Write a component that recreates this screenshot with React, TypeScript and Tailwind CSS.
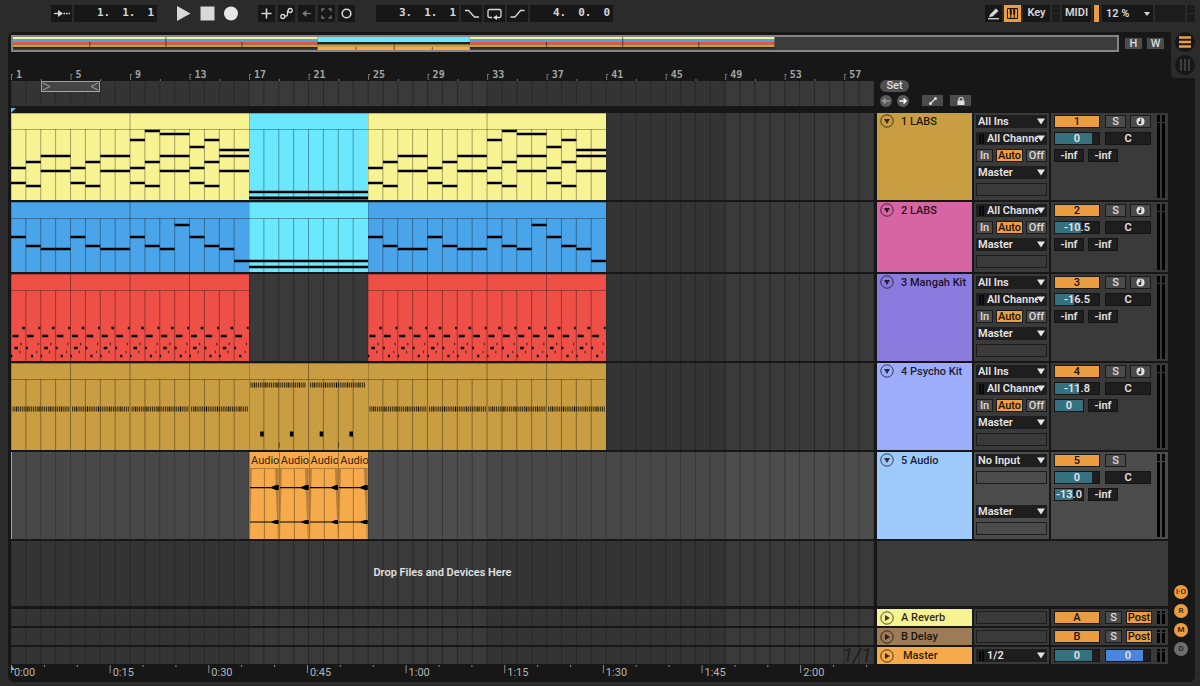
import type { ReactNode } from "react"
import classNames from "clsx"

const TOTAL_BARS = 58

const pct = (bars: number) => `${(bars / TOTAL_BARS) * 100}%`
const range = (length: number, step = 1) => Array.from({ length }, (_, i) => i * step)

// start and length are in bars, y and h in pixels
type Note = { start: number; length: number; y: number; h?: number; opacity?: number }

type Clip = {
    start: number
    length: number
    color: string
    splits?: number[]
    notes?: Note[]
}

const phrase = [0, 4, 8, 12]

const labsNotes: Note[] = [
    ...phrase.flatMap((b) => [
        { start: b, length: 1, y: 55 },
        { start: b, length: 1, y: 70 },
        { start: b + 1, length: 1, y: 49 },
        { start: b + 1, length: 1, y: 73 },
        { start: b + 2, length: 2, y: 43 },
        { start: b + 2, length: 2, y: 58 },
    ]),
    { start: 8, length: 1, y: 27 },
    { start: 9, length: 1, y: 18 },
    { start: 10, length: 2, y: 21 },
    { start: 12, length: 1, y: 34 },
    { start: 13, length: 1, y: 27 },
    { start: 14, length: 2, y: 37 },
]

const bassNotes: Note[] = [35, 44, 47, 47, 35, 44, 47, 47, 35, 44, 47, 23, 35, 44, 47, 59].map((y, i) => ({
    start: i,
    length: 1,
    y,
}))

const drumNotes: Note[] = range(8, 2).flatMap((b) => [
    { start: b + 0.1, length: 0.4, y: 62 },
    { start: b + 0.75, length: 0.18, y: 54 },
    { start: b + 0.63, length: 0.09, y: 70, opacity: 0.6 },
    { start: b + 0.23, length: 0.24, y: 74 },
    { start: b + 0.55, length: 0.08, y: 78, opacity: 0.6 },
    { start: b, length: 0.09, y: 82 },
    { start: b + 1.08, length: 0.44, y: 62 },
    { start: b + 1.85, length: 0.12, y: 54 },
    { start: b + 1.78, length: 0.08, y: 70, opacity: 0.6 },
    { start: b + 1, length: 0.13, y: 74 },
    { start: b + 1.7, length: 0.07, y: 78, opacity: 0.6 },
    { start: b + 1.34, length: 0.14, y: 82 },
])

const hats = (from: number, count: number, y: number): Note[] =>
    range(count).map((i) => ({
        start: from + 0.1 + i * 0.125,
        length: 0.07,
        y,
        h: 5,
        opacity: i % 6 === 2 ? 1 : 0.7,
    }))

const mainHats = phrase.flatMap((b) => hats(b, 31, 46))

const breakNotes: Note[] = [
    ...hats(0, 30, 22),
    ...hats(4, 30, 22),
    ...range(4, 2).map((b) => ({ start: b + 0.75, length: 0.24, y: 71, h: 5 })),
    { start: 2, length: 0.05, y: 82, h: 5, opacity: 0.7 },
    { start: 6, length: 0.05, y: 82, h: 5, opacity: 0.7 },
]

const trackClips: Clip[][] = [
    [
        { start: 0, length: 16, color: "bg-[#f8f392]", splits: [8], notes: labsNotes },
        {
            start: 16,
            length: 8,
            color: "bg-[#6be8fd]",
            notes: [{ start: 0, length: 8, y: 79 }, { start: 0, length: 8, y: 85, h: 3 }],
        },
        { start: 24, length: 16, color: "bg-[#f8f392]", splits: [8], notes: labsNotes },
    ],
    [
        { start: 0, length: 16, color: "bg-[#4aa4ea]", splits: [8], notes: bassNotes },
        {
            start: 16,
            length: 8,
            color: "bg-[#6be8fd]",
            notes: [{ start: 0, length: 8, y: 59 }, { start: 0, length: 8, y: 65 }],
        },
        { start: 24, length: 16, color: "bg-[#4aa4ea]", splits: [8], notes: bassNotes },
    ],
    [
        { start: 0, length: 16, color: "bg-[#ee4f47]", splits: [4, 8, 12], notes: drumNotes },
        { start: 24, length: 16, color: "bg-[#ee4f47]", splits: [4, 8, 12], notes: drumNotes },
    ],
    [
        { start: 0, length: 16, color: "bg-[#c99d42]", splits: [4, 8, 12], notes: mainHats },
        { start: 16, length: 8, color: "bg-[#c99d42]", splits: [4], notes: breakNotes },
        { start: 24, length: 16, color: "bg-[#c99d42]", splits: [4, 8, 12], notes: mainHats },
    ],
]

const VLine = ({ x, y1 = "0", className }: { x: string; y1?: string; className: string }) => (
    <line x1={x} x2={x} y1={y1} y2="100%" className={className} />
)

const Grid = ({ selected }: { selected?: boolean }) => (
    <svg className="absolute inset-0 size-full" aria-hidden="true">
        {range(4, 16).map((b) => (
            <rect
                key={b}
                x={pct(b)}
                width={pct(16)}
                height="100%"
                className={
                    selected
                        ? b % 32 ? "fill-[#4d4d4d]" : "fill-[#474747]"
                        : b % 32 ? "fill-[#3a3a3a]" : "fill-[#343434]"
                }
            />
        ))}
        {range(59).map((b) => (
            <VLine key={b} x={pct(b)} className={selected ? "stroke-[#393939]" : "stroke-[#282828]"} />
        ))}
    </svg>
)

const Lane = ({ selected, children }: { selected?: boolean; children?: ReactNode }) => (
    <div className="relative flex min-w-0 flex-1 overflow-hidden">
        <Grid selected={selected} />
        {children}
    </div>
)

const MidiClip = ({ start, length, color, splits = [], notes = [] }: Clip) => {
    const part = (bars: number) => `${(bars / length) * 100}%`
    return (
        <div className={classNames("absolute inset-y-0", color)} style={{ left: pct(start), width: pct(length) }}>
            <svg className="size-full" aria-hidden="true">
                <line x1="0" x2="100%" y1="16.5" y2="16.5" className="stroke-black/30" />
                <line x1="0" x2="100%" y1="0" y2="0" className="stroke-black/50" />
                {range(length).map((b) => (
                    <VLine
                        key={b}
                        x={part(b)}
                        y1={b === 0 || splits.includes(b) ? "0" : "16"}
                        className="stroke-black/35"
                    />
                ))}
                {notes.map((n, i) => (
                    <rect
                        key={i}
                        x={part(n.start)}
                        width={part(n.length)}
                        y={n.y - (n.h ?? 2.5) / 2}
                        height={n.h ?? 2.5}
                        opacity={n.opacity}
                    />
                ))}
            </svg>
        </div>
    )
}

const AudioClip = ({ start }: { start: number }) => (
    <div
        className="absolute inset-y-0 flex flex-col overflow-hidden border-l border-[#a8752f] bg-[#f5ab4c]"
        style={{ left: pct(start), width: pct(2) }}
    >
        <span className="h-[17px] border-b border-[#b27c37] pl-px text-[11px] leading-[17px] text-[#33230f]">Audio</span>
        <svg className="w-full flex-1" viewBox="0 0 30 70" preserveAspectRatio="none" aria-hidden="true">
            <path d="M0 0H2L0 70ZM30 0H26L29 70H30Z" className="fill-black/25" />
            <path d="M15 0V70" className="stroke-black/35" />
            <path d="M0 18H22L27 16H30V21H27L22 19.2H0Z" />
            <path d="M0 52.5H22L27 51H30V55H27L22 53.5H0Z" />
        </svg>
    </div>
)

const DownTriangle = () => (
    <svg className="pointer-events-none absolute right-0.5 top-[3px] h-[7px] w-2" viewBox="0 0 8 7" aria-hidden="true">
        <path d="M0 0.5H8L4 6.5Z" className="fill-[#e4e4e4]" />
    </svg>
)

type DropdownProps = { label: string; value: string; meter?: boolean }

const Dropdown = ({ label, value, meter }: DropdownProps) => (
    <div className="relative h-[13px] bg-[#1e1e1e]">
        {meter && (
            <svg className="pointer-events-none absolute left-[3px] top-0.5 h-[10px] w-[5px]" viewBox="0 0 5 10" aria-hidden="true">
                <path d="M1 0V10M4 0V10" className="stroke-black" strokeWidth="1.5" />
            </svg>
        )}
        <select
            aria-label={label}
            className={classNames(
                "block h-[13px] w-full appearance-none border-0 bg-transparent pr-[9px] text-[11px] leading-[13px] font-semibold text-[#e4e4e4] outline-none",
                meter ? "pl-[11px]" : "pl-0.5"
            )}
        >
            <option>{value}</option>
        </select>
        <DownTriangle />
    </div>
)

const EmptyBox = () => <div className="h-[13px] border border-[#1c1c1c]" />

const Btn = ({ label, className, on, children }: { label?: string; className?: string; on?: boolean; children: ReactNode }) => (
    <button
        type="button"
        aria-label={label}
        className={classNames(
            "flex h-[13px] items-center justify-center border border-[#1a1a1a] text-[11px] leading-none font-medium",
            on ? "bg-[#eb9d42] text-[#1b1208]" : "bg-[#4b4b4b] text-[#dcdcdc]",
            className
        )}
    >
        {children}
    </button>
)

type SliderProps = { label: string; text: string; fill?: number; className?: string; blue?: boolean }

const Slider = ({ label, text, fill = 0, className, blue }: SliderProps) => (
    <label className={classNames("relative block h-[13px] overflow-hidden border border-[#141414] bg-[#1e1e1e]", className)}>
        <div className={classNames("h-full", blue ? "bg-[#4a86dc]" : "bg-[#36717f]")} style={{ width: `${fill}%` }} />
        <span className="absolute inset-0 text-center text-[11px] leading-[11px] font-semibold text-[#e4e4e4]">{text}</span>
        <input type="range" aria-label={label} defaultValue={fill} className="absolute inset-0 m-0 w-full opacity-0" />
    </label>
)

const Meters = ({ small }: { small?: boolean }) => (
    <div className="ml-auto flex gap-0.5 self-stretch py-0.5 pr-[3px]">
        {[0, 1].map((i) => (
            <div key={i} className="flex w-[3px] flex-col gap-px">
                <div className={classNames("bg-black", small ? "h-0.5" : "h-[7px]")} />
                <div className="flex-1 bg-black" />
            </div>
        ))}
    </div>
)

type Track = {
    id: number
    name: string
    color: string
    height: string
    input?: string
    audio?: boolean
    volume: [string, number]
    sends: [string, number][]
}

const tracks: Track[] = [
    { id: 1, name: "1 LABS", color: "bg-[#c99d42]", height: "h-[87px]", input: "All Ins", volume: ["0", 85], sends: [["-inf", 0], ["-inf", 0]] },
    { id: 2, name: "2 LABS", color: "bg-[#d865a3]", height: "h-[70px]", volume: ["-10.5", 59], sends: [["-inf", 0], ["-inf", 0]] },
    { id: 3, name: "3 Mangah Kit", color: "bg-[#8c7bde]", height: "h-[87px]", input: "All Ins", volume: ["-16.5", 43], sends: [["-inf", 0], ["-inf", 0]] },
    { id: 4, name: "4 Psycho Kit", color: "bg-[#9dadfb]", height: "h-[87px]", input: "All Ins", volume: ["-11.8", 55], sends: [["0", 100], ["-inf", 0]] },
    { id: 5, name: "5 Audio", color: "bg-[#9dc9fb]", height: "h-[87px]", input: "No Input", audio: true, volume: ["0", 85], sends: [["-13.0", 66], ["-inf", 0]] },
]

const FoldButton = ({ folded, label }: { folded?: boolean; label: string }) => (
    <button type="button" aria-label={label} className="size-[14px] shrink-0 text-black/75">
        <svg viewBox="0 0 14 14" className="size-full" aria-hidden="true">
            <circle cx="7" cy="7" r="6.2" fill="none" stroke="currentColor" strokeWidth="0.9" />
            <path d={folded ? "M5 4L10 7L5 10Z" : "M4 5H10L7 10Z"} fill="currentColor" />
        </svg>
    </button>
)

const TrackHeader = ({ track }: { track: Track }) => {
    const bg = track.audio ? "bg-[#4b4b4b]" : "bg-[#3a3a3a]"
    return (
        <div className="flex w-[291px] shrink-0 gap-0.5">
            <div className={classNames("flex w-[95px] gap-[7px] pl-[3px] pt-px", track.color)}>
                <FoldButton label={`Fold ${track.name}`} />
                <h2 className="whitespace-nowrap text-[11px] leading-[15px] font-medium text-black/85">{track.name}</h2>
            </div>
            <div className={classNames("flex w-[75px] flex-col gap-1 px-0.5 pt-0.5", bg)}>
                {track.input && <Dropdown label="Input type" value={track.input} />}
                {track.audio ? (
                    <>
                        <EmptyBox />
                        <div className="h-[13px]" />
                    </>
                ) : (
                    <>
                        <Dropdown label="Input channel" value="All Channels" meter />
                        <div className="flex justify-between">
                            <Btn className="w-[17px]">In</Btn>
                            <Btn className="w-[27px]" on>Auto</Btn>
                            <Btn className="w-[21px]">Off</Btn>
                        </div>
                    </>
                )}
                <Dropdown label="Output type" value="Master" />
                <EmptyBox />
            </div>
            <div className={classNames("flex w-[117px] pl-[3px]", bg)}>
                <div className="flex flex-col gap-1 pt-0.5">
                    <div className="flex">
                        <Btn className="w-[46px]" on>{track.id}</Btn>
                        <Btn className="ml-[5px] w-[21px]">S</Btn>
                        {!track.audio && (
                            <Btn className="ml-1 w-[21px]" label="Arm">
                                <svg viewBox="0 0 9 9" className="size-[9px]" aria-hidden="true">
                                    <circle cx="4.5" cy="4.5" r="4" className="fill-[#e4e4e4]" />
                                    <path d="M4.8 1.5V5.5" className="stroke-[#2a2a2a]" />
                                    <circle cx="3.9" cy="5.7" r="1.4" className="fill-[#2a2a2a]" />
                                </svg>
                            </Btn>
                        )}
                    </div>
                    <div className="flex gap-[5px]">
                        <Slider label="Volume" text={track.volume[0]} fill={track.volume[1]} className="w-[46px]" />
                        <Slider label="Pan" text="C" className="w-[46px]" />
                    </div>
                    <div className="flex gap-1">
                        {track.sends.map(([text, fill], i) => (
                            <Slider key={i} label={`Send ${i ? "B" : "A"}`} text={text} fill={fill} className="w-[30px]" />
                        ))}
                    </div>
                </div>
                <Meters />
            </div>
        </div>
    )
}

type BusRowProps = { name: string; color: string; letter?: string }

const BusRow = ({ name, color, letter }: BusRowProps) => (
    <div className="flex h-[17px] gap-[3px]">
        <Lane>
            {!letter && <span className="relative ml-auto pr-0.5 text-xl leading-[17px] text-[#1d1d1d] italic">1/1</span>}
        </Lane>
        <div className="flex w-[291px] shrink-0 gap-0.5">
            <div className={classNames("flex w-[95px] items-center pl-[3px]", color, letter ? "gap-[7px]" : "gap-[9px]")}>
                <FoldButton folded label={`Unfold ${name}`} />
                <h2 className="text-[11px] leading-none font-medium text-black/85">{name}</h2>
            </div>
            <div className="w-[75px] bg-[#3a3a3a] px-0.5 pt-0.5">
                {letter ? <EmptyBox /> : <Dropdown label="Master output" value="1/2" meter />}
            </div>
            <div className="flex w-[117px] bg-[#3a3a3a] pl-[3px]">
                <div className="flex pt-0.5">
                    {letter ? (
                        <>
                            <Btn className="w-[46px]" on>{letter}</Btn>
                            <Btn className="ml-[5px] w-[17px]">S</Btn>
                            <Btn className="ml-1 w-[26px]" on>Post</Btn>
                        </>
                    ) : (
                        <>
                            <Slider label="Master volume" text="0" fill={85} className="w-[46px]" />
                            <Slider label="Cue volume" text="0" fill={85} className="ml-[5px] w-[46px]" blue />
                        </>
                    )}
                </div>
                <Meters small />
            </div>
        </div>
    </div>
)

const ToolButton = ({ label, className, children }: { label: string; className?: string; children: ReactNode }) => (
    <button
        type="button"
        aria-label={label}
        className={classNames("flex h-[17px] items-center justify-center text-[#d8d8d8]", className ?? "w-[17px] bg-[#171717]")}
    >
        {children}
    </button>
)

const Icon = ({ children, w = 17 }: { children: ReactNode; w?: 17 | 21 }) => (
    <svg
        viewBox={`0 0 ${w} 17`}
        className={classNames("h-[17px]", w === 17 ? "w-[17px]" : "w-[21px]")}
        fill="none"
        stroke="currentColor"
        strokeWidth="1.3"
        aria-hidden="true"
    >
        {children}
    </svg>
)

const Counter = ({ parts, label }: { parts: [string, string, string]; label: string }) => (
    <div
        role="group"
        aria-label={label}
        className="flex h-[17px] w-[83px] items-center justify-end gap-3 bg-[#171717] pr-[3px] font-['DejaVu_Sans_Mono',monospace] text-[11px] font-bold text-[#d8d8d8]"
    >
        <span>{parts[0]}.</span>
        <span>{parts[1]}.</span>
        <span>{parts[2]}</span>
    </div>
)

const StackedLeds = () => (
    <div className="flex h-[17px] w-2 flex-col gap-px">
        <div className="flex-1 bg-[#1c1c1c]" />
        <div className="flex-1 bg-[#1c1c1c]" />
    </div>
)

const Toolbar = () => (
    <header className="flex h-8 shrink-0 items-start pt-[5px] pr-[5px] pl-[51px]">
        <div className="flex gap-0.5">
            <ToolButton label="Follow" className="w-[21px] bg-[#171717]">
                <Icon w={21}>
                    <path d="M3 8.5H9" />
                    <path d="M7 5L12 8.5L7 12Z" fill="currentColor" stroke="none" />
                    <path d="M12.5 8.5H19" strokeDasharray="1.6 1" />
                </Icon>
            </ToolButton>
            <Counter label="Arrangement position" parts={["1", "1", "1"]} />
        </div>
        <div className="ml-[17px] flex gap-[7px]">
            <ToolButton label="Play" className="w-[17px]">
                <Icon><path d="M3 1V16L16.5 8.5Z" fill="currentColor" stroke="none" /></Icon>
            </ToolButton>
            <ToolButton label="Stop" className="w-[17px]">
                <Icon><rect x="2.5" y="1.5" width="14" height="14" fill="currentColor" stroke="none" /></Icon>
            </ToolButton>
            <ToolButton label="Record" className="w-[17px]">
                <Icon><circle cx="9" cy="8.5" r="7" fill="#e6e6e6" stroke="none" /></Icon>
            </ToolButton>
        </div>
        <div className="ml-[19px] flex gap-[3px]">
            <ToolButton label="Overdub">
                <Icon><path d="M8.5 3.5V13.5M3.5 8.5H13.5" strokeWidth="1.6" /></Icon>
            </ToolButton>
            <ToolButton label="Automation arm">
                <Icon>
                    <circle cx="4.8" cy="11.5" r="2" />
                    <circle cx="12.2" cy="5.5" r="2" />
                    <path d="M6.8 11.2Q10 11 9.5 8.5Q9 6 10.2 5.5" />
                </Icon>
            </ToolButton>
            <ToolButton label="Re-enable automation">
                <Icon>
                    <g stroke="#777"><path d="M7 8.5H13" /><path d="M4 8.5L8.5 5V12Z" fill="#777" stroke="none" /></g>
                </Icon>
            </ToolButton>
            <ToolButton label="Capture">
                <Icon><path d="M4 6.5V4H6.5M10.5 4H13V6.5M13 10.5V13H10.5M6.5 13H4V10.5" stroke="#777" /></Icon>
            </ToolButton>
            <ToolButton label="Session record">
                <Icon><circle cx="8.5" cy="8.5" r="4.3" strokeWidth="1.6" /></Icon>
            </ToolButton>
        </div>
        <div className="ml-[21px] flex gap-0.5">
            <Counter label="Loop start" parts={["3", "1", "1"]} />
            <ToolButton label="Punch in" className="w-[21px] bg-[#171717]">
                <Icon w={21}><path d="M4 5.5H7.5L13.5 12H18" /></Icon>
            </ToolButton>
            <ToolButton label="Loop" className="w-[21px] bg-[#171717]">
                <Icon w={21}>
                    <path d="M8 12.5H5.5Q4 12.5 4 11V6Q4 4.5 5.5 4.5H15.5Q17 4.5 17 6V11Q17 12.5 15.5 12.5H13" />
                    <path d="M9 12.5L13 10V15Z" fill="currentColor" stroke="none" />
                </Icon>
            </ToolButton>
            <ToolButton label="Punch out" className="w-[21px] bg-[#171717]">
                <Icon w={21}><path d="M3.5 12H8L13.5 5.5H17.5" /></Icon>
            </ToolButton>
            <Counter label="Loop length" parts={["4", "0", "0"]} />
        </div>
        <div className="ml-auto flex gap-0.5 text-[11px] font-semibold text-[#d8d8d8]">
            <ToolButton label="Draw mode">
                <Icon>
                    <path d="M5 9.5L11 3.5L13.5 6L7.5 11.5L4 12Z" fill="currentColor" stroke="none" />
                    <path d="M3 13.7H14" />
                </Icon>
            </ToolButton>
            <ToolButton label="Computer MIDI keyboard" className="w-[17px] bg-[#eb9d42]">
                <Icon>
                    <g stroke="#1b1208" strokeWidth="1">
                        <path d="M3.5 3.5H13.5V13.5H3.5ZM6.8 9V13.5M10.2 9V13.5" />
                        <path d="M6.8 3.5V9.5M10.2 3.5V9.5" strokeWidth="2" />
                    </g>
                </Icon>
            </ToolButton>
            <button type="button" className="h-[17px] w-[27px] bg-[#171717]">Key</button>
            <StackedLeds />
            <button type="button" className="h-[17px] w-[29px] bg-[#171717]">MIDI</button>
            <div className="flex h-[17px] w-[7px] justify-center bg-[#171717]">
                <div className="w-[5px] bg-[#eb9d42]" />
            </div>
            <div className="relative h-[17px] w-[51px] bg-[#171717]">
                <select aria-label="CPU load" className="block h-[17px] w-full appearance-none bg-transparent pl-1 text-[11px] leading-[17px] outline-none">
                    <option>12 %</option>
                </select>
                <svg className="pointer-events-none absolute right-[3px] top-[7px] h-1 w-1.5" viewBox="0 0 6 4" aria-hidden="true">
                    <path d="M0 0H6L3 4Z" fill="currentColor" />
                </svg>
            </div>
            <div className="h-[17px] w-[30px] bg-[#1c1c1c]" />
            <StackedLeds />
        </div>
    </header>
)

const overviewRows = ["fill-[#f8f392]", "fill-[#4aa4ea]", "fill-[#ee4f47]", "fill-[#c99d42]"]

const Overview = () => (
    <div className="flex items-center pt-[3px] pr-[6px] pl-[3px]">
        <div className="h-[17px] min-w-0 flex-1 border-2 border-[#858585] bg-[#3c3c3c]">
            <svg className="size-full" viewBox="0 0 58 13" preserveAspectRatio="none" aria-hidden="true">
                {[0, 24].map((b) => (
                    <g key={b}>
                        {overviewRows.map((fill, i) => (
                            <rect key={fill} x={b} y={i * 2.5} width="16" height="2.5" className={fill} />
                        ))}
                        <rect x={b} y="10" width="16" height="1.4" className="fill-[#20262a]" />
                        {[4, 12].map((s) => <rect key={s} x={b + s} y="5" width="0.06" height="5" className="fill-black/45" />)}
                        <rect x={b + 8} width="0.06" height="10" className="fill-black/45" />
                    </g>
                ))}
                <rect x="16" width="8" height="5" className="fill-[#6be8fd]" />
                <rect x="16" y="5" width="8" height="2.5" className="fill-[#1d2426]" />
                <rect x="16" y="7.5" width="8" height="2.5" className="fill-[#c99d42]" />
                <rect x="16" y="10" width="8" height="3" className="fill-[#f5ab4c]" />
                {[18, 20, 22].map((b) => <rect key={b} x={b} y={b === 20 ? 7.5 : 10} width="0.06" height="6" className="fill-black/45" />)}
            </svg>
        </div>
        <div className="ml-[5px] flex gap-[3px]">
            <Btn className="w-[19px]">H</Btn>
            <Btn className="w-[19px]">W</Btn>
        </div>
    </div>
)

const RoundArrow = ({ label, flip }: { label: string; flip?: boolean }) => (
    <button type="button" aria-label={label} className={classNames("size-3 rounded-full bg-[#5a5a5a]", flip ? "text-[#9a9a9a]" : "text-white")}>
        <svg viewBox="0 0 12 12" className="size-full" aria-hidden="true">
            <path d={flip ? "M9.5 6H3M5.5 3.5L3 6L5.5 8.5" : "M2.5 6H9M6.5 3.5L9 6L6.5 8.5"} fill="none" stroke="currentColor" strokeWidth="1.5" />
        </svg>
    </button>
)

const BarRuler = () => (
    <div className="flex h-[61px] shrink-0 gap-[3px]">
        <div className="relative min-w-0 flex-1">
            <div className="relative flex h-[29px] items-end overflow-hidden">
                <svg className="absolute inset-0 size-full" aria-hidden="true">
                    {range(15, 4).map((b) => (
                        <g key={b} className="fill-[#777]">
                            <rect x={pct(b)} y="22" width="1" height="6" />
                            <rect x={pct(b)} y="22" width="2" height="1" />
                            <rect x={pct(b + 2)} y="27" width="1" height="2" />
                        </g>
                    ))}
                </svg>
                {range(15, 4).map((b) => (
                    <span
                        key={b}
                        className="shrink-0 pl-[5px] font-['DejaVu_Sans_Mono',monospace] text-[10px] leading-3 font-bold text-[#a4a4a4]"
                        style={{ width: pct(4) }}
                    >
                        {b + 1}
                    </span>
                ))}
            </div>
            <div className="relative flex h-[25px]">
                <Lane />
                <div
                    className="absolute top-0 flex h-[11px] items-center justify-between border border-[#a4a4a4] bg-[#454545]"
                    style={{ left: pct(2), width: pct(4) }}
                >
                    {["M1 1L8 4.5L1 8", "M8 1L1 4.5L8 8"].map((d) => (
                        <svg key={d} viewBox="0 0 9 9" className="size-[9px]" fill="none" aria-hidden="true">
                            <path d={d} className="stroke-[#a4a4a4]" />
                        </svg>
                    ))}
                </div>
            </div>
            <svg className="absolute bottom-0 left-0 h-[5px] w-[5px]" viewBox="0 0 5 5" aria-hidden="true">
                <path d="M0 0H5L0 5Z" className="fill-[#5cc0dc]" />
            </svg>
        </div>
        <div className="flex w-[291px] shrink-0 flex-col gap-0.5 pt-7 pl-[3px]">
            <button type="button" className="h-3 w-[29px] rounded-full bg-[#4f4f4f] text-[11px] leading-3 font-medium text-[#e0e0e0]">Set</button>
            <div className="flex items-center">
                <RoundArrow label="Previous locator" flip />
                <div className="w-[5px]" />
                <RoundArrow label="Next locator" />
                <Btn className="ml-3 w-[23px]" label="Automation mode">
                    <svg viewBox="0 0 10 10" className="size-[10px]" fill="currentColor" aria-hidden="true">
                        <circle cx="2.5" cy="7.5" r="1.5" />
                        <circle cx="7.5" cy="2.5" r="1.5" />
                        <path d="M3 7L7 3" stroke="currentColor" strokeWidth="1.3" />
                    </svg>
                </Btn>
                <Btn className="ml-[5px] w-[23px]" label="Lock envelopes">
                    <svg viewBox="0 0 10 10" className="size-[10px]" aria-hidden="true">
                        <rect x="1.5" y="4.5" width="7" height="4.5" fill="currentColor" />
                        <path d="M3 5V3.5Q3 1.5 5 1.5T7 3.5V5" fill="none" stroke="currentColor" strokeWidth="1.2" />
                    </svg>
                </Btn>
            </div>
        </div>
    </div>
)

// one label each 15 seconds, which is 6.63 bars at the song's tempo
const SECONDS_STEP = 6.63

const TimeRuler = () => (
    <div className="mr-[294px] flex h-[18px] shrink-0">
        <div className="relative flex min-w-0 flex-1 overflow-hidden">
            <svg className="absolute inset-0 size-full" aria-hidden="true">
                {range(27).map((i) => (
                    <rect
                        key={i}
                        x={pct((i * SECONDS_STEP) / 3)}
                        y="1"
                        width="1"
                        height={i % 3 ? 2 : 8}
                        className="fill-[#8a8a8a]"
                    />
                ))}
                <path d="M0 1L4 6H0Z" className="fill-[#5cc0dc]" />
            </svg>
            {range(9).map((i) => (
                <span
                    key={i}
                    className="shrink-0 pl-[3px] text-[11px] leading-[17px] text-[#b4b4b4]"
                    style={{ width: pct(SECONDS_STEP) }}
                >
                    {Math.floor(i / 4)}:{String((i % 4) * 15).padStart(2, "0")}
                </span>
            ))}
        </div>
    </div>
)

const ViewToggle = ({ label, on, vertical }: { label: string; on?: boolean; vertical?: boolean }) => (
    <button type="button" aria-label={label} className="size-5 rounded-full bg-[#171717]">
        <svg viewBox="0 0 20 20" className="size-full" aria-hidden="true">
            <path
                d={vertical ? "M6 4V16M10 4V16M14 4V16" : "M4 5.5H16M4 10H16M4 14.5H16"}
                className={on ? "stroke-[#eb9d42]" : "stroke-[#4d4d4d]"}
                strokeWidth={on ? 2.4 : 1.5}
            />
        </svg>
    </button>
)

const SideRail = () => (
    <div className="flex w-6 shrink-0 flex-col">
        <div className="flex h-[46px] flex-col items-end gap-[3px] rounded-bl bg-[#2b2b2b]">
            <ViewToggle label="Arrangement view" on />
            <ViewToggle label="Session view" vertical />
        </div>
        <div className="mt-auto flex flex-col gap-[5px] pb-[26px] pl-[3px]">
            {["I·O", "R", "M", "D"].map((l) => (
                <button
                    key={l}
                    type="button"
                    className={classNames(
                        "size-[14px] rounded-full text-[8px] leading-none font-medium",
                        l === "D" ? "bg-[#6e6e6e] text-[#222]" : "bg-[#eb9d42] text-[#2b1b08]"
                    )}
                >
                    {l}
                </button>
            ))}
        </div>
    </div>
)

const App = () => {
    return (
        <div className="flex min-h-screen flex-col bg-[#2b2b2b] pb-1 font-['Roboto','Liberation_Sans',sans-serif]">
            <Toolbar />
            <main className="mr-[5px] ml-2 flex flex-1 rounded-md bg-[#171717]">
                <div className="flex min-w-0 flex-1 flex-col">
                    <Overview />
                    <div className="flex flex-1 flex-col px-[3px]">
                        <BarRuler />
                        <div className="flex flex-1 flex-col gap-0.5">
                            {tracks.map((track, i) => (
                                <div key={track.id} className={classNames("flex gap-[3px]", track.height)}>
                                    <Lane selected={track.audio}>
                                        {trackClips[i]?.map((clip) => <MidiClip key={clip.start} {...clip} />)}
                                        {track.audio && (
                                            <>
                                                <div className="relative w-px bg-[#5cc0dc]" />
                                                {[16, 18, 20, 22].map((b) => <AudioClip key={b} start={b} />)}
                                            </>
                                        )}
                                    </Lane>
                                    <TrackHeader track={track} />
                                </div>
                            ))}
                            <div className="flex min-h-16 flex-1 gap-[3px]">
                                <Lane>
                                    <p className="relative m-auto text-[11px] font-semibold text-[#e0e0e0]">Drop Files and Devices Here</p>
                                </Lane>
                                <div className="w-[291px] shrink-0 bg-[#3a3a3a]" />
                            </div>
                            <div className="mt-px flex flex-col gap-0.5">
                                <BusRow name="A Reverb" color="bg-[#f8f392]" letter="A" />
                                <BusRow name="B Delay" color="bg-[#9c7b56]" letter="B" />
                                <BusRow name="Master" color="bg-[#f5ab4c]" />
                            </div>
                        </div>
                        <TimeRuler />
                    </div>
                </div>
                <SideRail />
            </main>
        </div>
    )
}

export default App
